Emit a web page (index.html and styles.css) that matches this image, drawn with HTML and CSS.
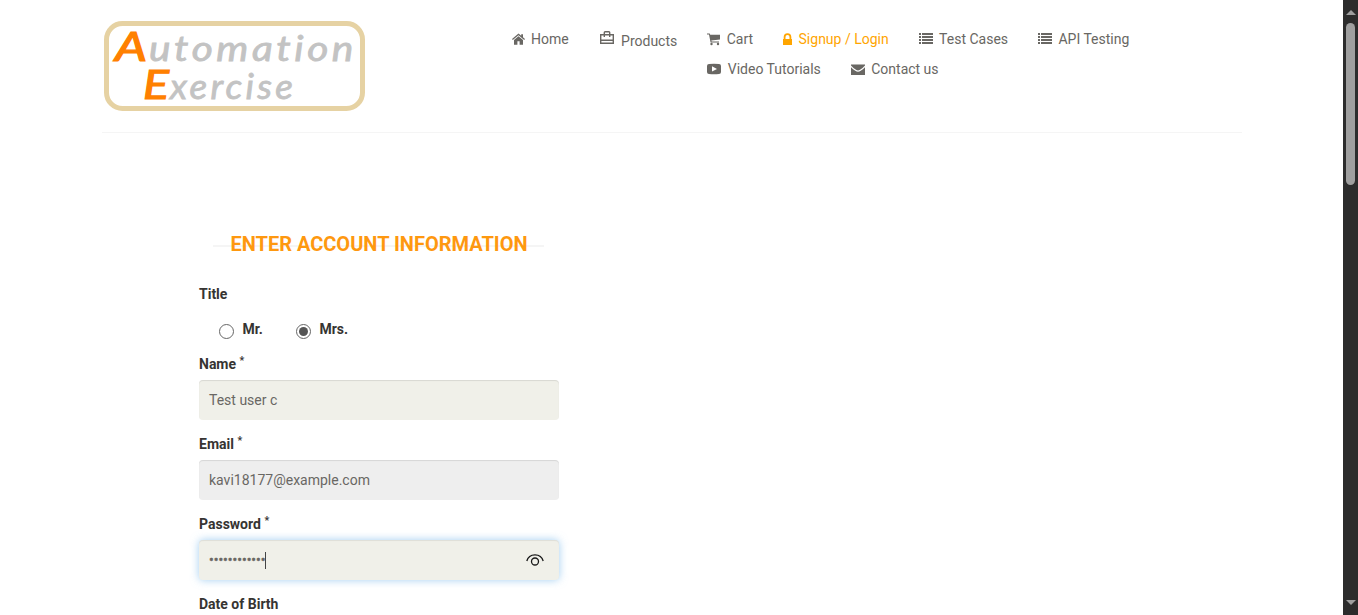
FILE: index.html
```html
<!DOCTYPE html>
<html lang="en">
<head>
<meta charset="utf-8">
<title>Automation Exercise - Signup</title>
<link rel="stylesheet" href="styles.css">
</head>
<body>
<div class="viewport">
<main class="page">
  <header class="header">
    <svg class="logo" viewBox="0 0 264 92" role="img" aria-label="Automation Exercise">
      <rect class="logo-frame" x="3.5" y="3.5" width="256" height="85" rx="16"/>
      <text class="logo-cap" x="12" y="41" textLength="32" lengthAdjust="spacingAndGlyphs">A</text>
      <text class="logo-text" x="46" y="41" textLength="208" lengthAdjust="spacingAndGlyphs">utomation</text>
      <text class="logo-cap" x="40" y="79" textLength="26" lengthAdjust="spacingAndGlyphs">E</text>
      <text class="logo-text" x="67" y="79" textLength="126" lengthAdjust="spacingAndGlyphs">xercise</text>
    </svg>
    <nav class="nav">
      <a class="item home"><svg class="w13" viewBox="0 0 13 14"><path d="M6.500 1.500 0 7l.8.900L6.500 3.300l5.700 4.600.8-.9-2-1.700V2.200H9.200v1.500zM6.500 4.200 2 8V12.800H5.400V9.300h2.200v3.500H11V8z"/></svg>Home</a>
      <a class="item products"><svg class="w14 bag" viewBox="0 0 14 14"><path d="M.7 3.700h12.600v8.600H.7zM.7 9.300h12.600M4.300 6V1.500q0-.8.8-.8h3.800q.8 0 .8.800V6" fill="none" stroke="currentColor" stroke-width="1.400"/></svg>Products</a>
      <div class="group">
        <a class="item"><svg class="w13" viewBox="0 0 13 14"><path d="M0 1.500h2.700l.5 1.300H13v4.700l-8.700 1.100.3.900H12v1H3.600L2 2.600H0z"/><circle cx="4.500" cy="12" r="1.200"/><circle cx="11" cy="12" r="1.200"/></svg>Cart</a>
        <a class="item active"><svg class="w9" viewBox="0 0 9 14"><path d="M0 7h.7V5a3.800 3.800 0 0 1 7.600 0v2H9v6H0zM2.500 7h4V5a2 2 0 0 0-4 0z" fill-rule="evenodd"/></svg>Signup / Login</a>
        <a class="item"><svg class="w14" viewBox="0 0 14 14"><path d="M0 1h2v2H0zM3 1h11v2H3zM0 4h2v2H0zM3 4h11v2H3zM0 7h2v2H0zM3 7h11v2H3zM0 10h2v2H0zM3 10h11v2H3z"/></svg>Test Cases</a>
        <a class="item"><svg class="w14" viewBox="0 0 14 14"><path d="M0 1h2v2H0zM3 1h11v2H3zM0 4h2v2H0zM3 4h11v2H3zM0 7h2v2H0zM3 7h11v2H3zM0 10h2v2H0zM3 10h11v2H3z"/></svg>API Testing</a>
        <a class="item"><svg class="w14" viewBox="0 0 14 14"><path fill-rule="evenodd" d="M2 2q5-.5 10 0 2 .2 2 2v6q0 1.800-2 2-5 .5-10 0-2-.2-2-2V4q0-1.800 2-2zM5 4.200v5.400l5-2.700z"/></svg>Video Tutorials</a>
        <a class="item"><svg class="w14" viewBox="0 0 14 14"><path d="M0 2.500h14v1Q12 6 9 7.700 7 9.300 5 7.700 2 6 0 3.500zM0 5.200q2 2 4.300 3.500Q7 10.600 9.700 8.700 12 7.200 14 5.200V13H0z"/></svg>Contact us</a>
      </div>
    </nav>
  </header>
  <form class="form">
    <h2 class="heading">Enter Account Information</h2>
    <div class="label title-label">Title</div>
    <div class="radios">
      <label class="radio"><span class="dot"></span>Mr.</label>
      <label class="radio"><span class="dot on"></span>Mrs.</label>
    </div>
    <div class="label">Name <sup>*</sup></div>
    <div class="field">Test user c</div>
    <div class="label">Email <sup>*</sup></div>
    <div class="field disabled">kavi18177@example.com</div>
    <div class="label">Password <sup>*</sup></div>
    <div class="field focus"><span class="bullets">••••••••••••</span><span class="caret"></span>
      <svg class="eye" viewBox="0 0 18 14"><path d="M.8 8C3-.3 15-.3 17.200 8"/><circle cx="9" cy="8.500" r="3.500"/></svg>
    </div>
    <div class="label">Date of Birth</div>
  </form>
</main>
<aside class="scrollbar"><i class="up"></i><i class="thumb"></i><i class="down"></i></aside>
</div>
</body>
</html>
```

FILE: styles.css
```css
* { box-sizing: border-box; }
body { margin: 0; background: #fff; font: 14px/20px Roboto, sans-serif; color: #696763; }
.viewport { display: flex; height: 615px; overflow: hidden; }
.page { flex: 1; padding: 0 101.5px; }
.header { display: flex; height: 133px; padding: 20px 0 0 1.5px; border-bottom: 1px solid #f5f5f5; }
.logo { width: 264px; height: 92px; flex: none; }
.logo-frame { fill: none; stroke: #e6d2a3; stroke-width: 5; }
.logo-text, .logo-cap { font-family: Lato, sans-serif; font-style: italic; }
.logo-text { font-size: 34px; letter-spacing: 3px; fill: #c3c3c3; stroke: #c3c3c3; stroke-width: .8; }
.logo-cap { font-size: 41px; fill: #ff8000; stroke: #ff8000; stroke-width: 1.2; }
.nav { display: flex; gap: 30px; padding: 9px 0 0 144.5px; align-items: flex-start; }
.item { display: flex; align-items: center; gap: 6.500px; white-space: nowrap; }
.item svg { height: 14px; flex: none; fill: currentColor; }
.w13 { width: 13px; }
.w14 { width: 14px; }
.w9 { width: 9px; }
.products { gap: 7px; padding-top: 2px; margin-left: 1.400px; }
.products .bag { margin-bottom: 6px; }
.group { display: flex; flex-wrap: wrap; width: 440px; gap: 10px 29.900px; }
.active { color: #ffa500; }
.form { width: 360px; margin: 101px 0 0 97.5px; }
.heading { position: relative; margin: 0 14px 30px; font-size: 20px; font-weight: 700; line-height: 20px; text-align: center; text-transform: uppercase; color: #fe980f; white-space: nowrap; }
.heading::before { content: ""; position: absolute; z-index: -1; left: 0; right: 1px; top: 11px; height: 2px; background: #f5f5f5; }
.label { height: 20px; margin-bottom: 6px; font-weight: 700; color: #363432; }
.title-label { margin-bottom: 15px; }
.label sup { font-size: 10.500px; line-height: 0; vertical-align: baseline; position: relative; top: -5px; }
.radios { display: flex; gap: 33px; height: 20px; margin-bottom: 15px; padding-left: 20px; }
.radio { display: flex; gap: 8.500px; font-weight: 700; color: #363432; }
.dot { width: 15px; height: 15px; margin-top: 5px; border: 1px solid #666; border-radius: 50%; }
.dot.on { background: #555; background-clip: content-box; padding: 2px; }
.field { display: flex; align-items: center; height: 40px; margin-bottom: 14px; padding: 0 15px 0 10px; border-radius: 4px; background: #f0f0e9; box-shadow: inset 0 1px 1px rgba(0,0,0,.1); }
.disabled { background: #eee; }
.focus { box-shadow: inset 0 1px 1px rgba(0,0,0,.075), 0 0 8px rgba(102,175,233,.6); }
.bullets { width: 56px; letter-spacing: -.02px; white-space: nowrap; -webkit-text-stroke: .4px; }
.caret { width: 1px; height: 17px; background: #444; }
.eye { width: 18px; height: 14px; margin-left: auto; fill: none; stroke: #181818; stroke-width: 1.300; }
.scrollbar { display: flex; flex-direction: column; align-items: center; width: 15px; padding: 10px 0; background: #2c2c2c; }
.up, .down { border: solid transparent; border-width: 0 5px; }
.up { border-bottom: 5px solid #9f9f9f; }
.thumb { width: 9px; height: 162px; margin-top: 8px; border-radius: 5px; background: #9f9f9f; }
.down { margin-top: auto; border-top: 5px solid #9f9f9f; }
```
